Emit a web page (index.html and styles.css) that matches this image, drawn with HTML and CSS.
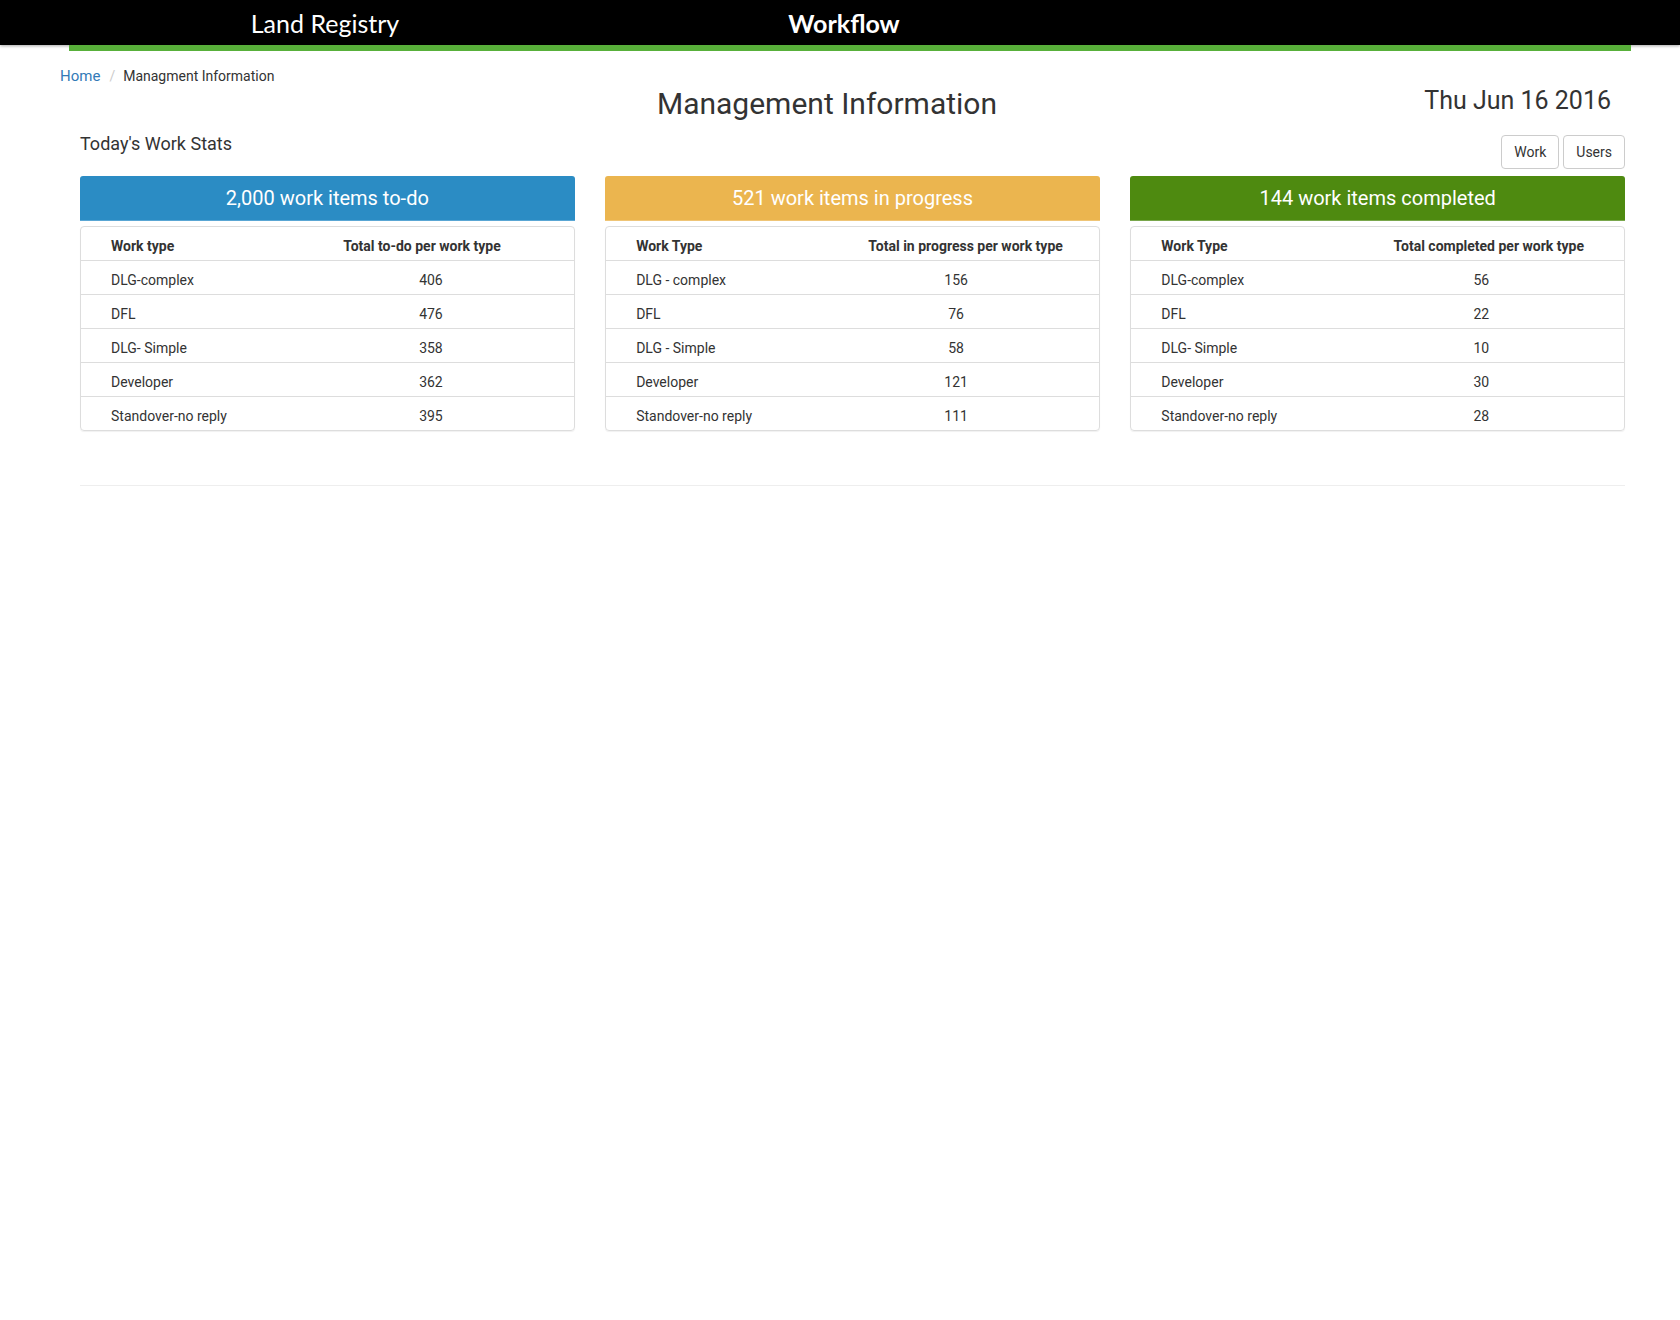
FILE: index.html
```html
<!DOCTYPE html>
<html lang="en">
<head>
<meta charset="utf-8">
<title>Management Information</title>
<link rel="stylesheet" href="styles.css">
</head>
<body>
<header class="topbar">
  <span class="brand">Land Registry</span>
  <span class="app">Workflow</span>
</header>
<div class="accent"></div>

<main class="page">
  <ol class="breadcrumb">
    <li><a href="#">Home</a></li>
    <li class="active">Managment Information</li>
  </ol>

  <div class="heading-row">
    <div></div>
    <h1 class="title">Management Information</h1>
    <div class="date">Thu Jun 16 2016</div>
  </div>

  <div class="stats-row">
    <h2 class="stats-title">Today's Work Stats</h2>
    <div class="btn-group">
      <button class="btn">Work</button>
      <button class="btn">Users</button>
    </div>
  </div>

  <div class="cards">
    <section class="card">
      <div class="banner banner-todo">2,000 work items to-do</div>
      <div class="panel">
        <table class="stats">
          <thead><tr><th class="c1">Work type</th><th class="c2">Total to-do per work type</th></tr></thead>
          <tbody>
            <tr><td class="c1">DLG-complex</td><td class="c2">406</td></tr>
            <tr><td class="c1">DFL</td><td class="c2">476</td></tr>
            <tr><td class="c1">DLG- Simple</td><td class="c2">358</td></tr>
            <tr><td class="c1">Developer</td><td class="c2">362</td></tr>
            <tr><td class="c1">Standover-no reply</td><td class="c2">395</td></tr>
          </tbody>
        </table>
      </div>
    </section>

    <section class="card">
      <div class="banner banner-progress">521 work items in progress</div>
      <div class="panel">
        <table class="stats">
          <thead><tr><th class="c1">Work Type</th><th class="c2">Total in progress per work type</th></tr></thead>
          <tbody>
            <tr><td class="c1">DLG - complex</td><td class="c2">156</td></tr>
            <tr><td class="c1">DFL</td><td class="c2">76</td></tr>
            <tr><td class="c1">DLG - Simple</td><td class="c2">58</td></tr>
            <tr><td class="c1">Developer</td><td class="c2">121</td></tr>
            <tr><td class="c1">Standover-no reply</td><td class="c2">111</td></tr>
          </tbody>
        </table>
      </div>
    </section>

    <section class="card">
      <div class="banner banner-done">144 work items completed</div>
      <div class="panel">
        <table class="stats">
          <thead><tr><th class="c1">Work Type</th><th class="c2">Total completed per work type</th></tr></thead>
          <tbody>
            <tr><td class="c1">DLG-complex</td><td class="c2">56</td></tr>
            <tr><td class="c1">DFL</td><td class="c2">22</td></tr>
            <tr><td class="c1">DLG- Simple</td><td class="c2">10</td></tr>
            <tr><td class="c1">Developer</td><td class="c2">30</td></tr>
            <tr><td class="c1">Standover-no reply</td><td class="c2">28</td></tr>
          </tbody>
        </table>
      </div>
    </section>
  </div>

  <hr class="divider">
</main>
</body>
</html>
```

FILE: styles.css
```css
* { box-sizing: border-box; }

body {
  margin: 0;
  font-family: Roboto, "Liberation Sans", sans-serif;
  font-size: 14px;
  color: #333;
  background: #fff;
}

.topbar {
  display: grid;
  grid-template-columns: 650px 388px;
  height: 45px;
  padding-top: 2px;
  background: #000;
  color: #fff;
  font-family: Lato, "Liberation Sans", sans-serif;
  font-size: 25px;
  line-height: 43px;
  text-align: center;
  box-shadow: 0 1px 3px rgba(0, 0, 0, 0.35);
}

.brand { font-weight: 400; }
.app { font-weight: 700; }

.accent {
  height: 6px;
  margin: 0 49px 0 69px;
  background: #58b03a;
}

.page {
  padding: 0 55px 0 80px;
}

.breadcrumb {
  list-style: none;
  display: flex;
  margin: 15px 0 0 -20px;
  padding: 0;
  font-size: 14px;
  line-height: 20px;
}

.breadcrumb li + li::before {
  content: "/";
  color: #ccc;
  padding: 0 8px 0 9px;
}

.breadcrumb a {
  color: #337ab7;
  text-decoration: none;
  font-size: 15px;
}

.breadcrumb .active { color: #333; font-size: 14px; }

.heading-row {
  display: grid;
  grid-template-columns: 1fr auto 1fr;
  margin: 0 15px 0 -20px;
}

.title {
  margin: 0 16px 0 0;
  font-size: 30px;
  font-weight: 400;
  line-height: 36px;
  color: #333;
}

.date {
  justify-self: end;
  font-size: 25px;
  line-height: 30px;
  margin-right: -1px;
  color: #333;
}

.stats-row {
  display: flex;
  justify-content: space-between;
  align-items: flex-start;
}

.stats-title {
  margin: 11px 0 0;
  font-size: 18px;
  font-weight: 400;
  line-height: 22px;
  color: #333;
}

.btn-group {
  display: flex;
  gap: 4px;
  margin-top: 13px;
}

.btn {
  font-family: Roboto, "Liberation Sans", sans-serif;
  font-size: 14px;
  line-height: 20px;
  padding: 6px 12px;
  color: #333;
  background: #fff;
  border: 1px solid #ccc;
  border-radius: 4px;
}

.cards {
  display: grid;
  grid-template-columns: repeat(3, 1fr);
  gap: 30.5px;
  margin-top: 7px;
}

.banner {
  height: 45px;
  line-height: 45px;
  text-align: center;
  color: #fff;
  font-size: 20px;
  border-radius: 3px 3px 0 0;
}

.banner-todo { background: #2b8cc4; border-bottom: 1px solid #5aa6d4; }
.banner-progress { background: #ebb54f; border-bottom: 1px solid #efc577; }
.banner-done { background: #4e8a10; border-bottom: 1px solid #79a74c; }

.panel {
  margin-top: 5px;
  border: 1px solid #ddd;
  border-radius: 4px;
  box-shadow: 0 1px 1px rgba(0, 0, 0, 0.06);
}

.stats {
  width: 100%;
  border-collapse: collapse;
  table-layout: fixed;
  font-size: 14px;
  line-height: 17px;
}

.stats th,
.stats td {
  padding: 11px 0 5px;
  text-align: left;
  color: #333;
}

.stats th { font-weight: 700; }

.stats tbody tr { border-top: 1px solid #ddd; }

.stats .c1 { width: 51.6%; padding-left: 30px; }
.stats th.c2 { padding-left: 8px; }
.stats td.c2 { text-align: center; padding-left: 8px; padding-right: 55px; }

.divider {
  margin: 54px 0 0;
  border: 0;
  border-top: 1px solid #eee;
}
```
